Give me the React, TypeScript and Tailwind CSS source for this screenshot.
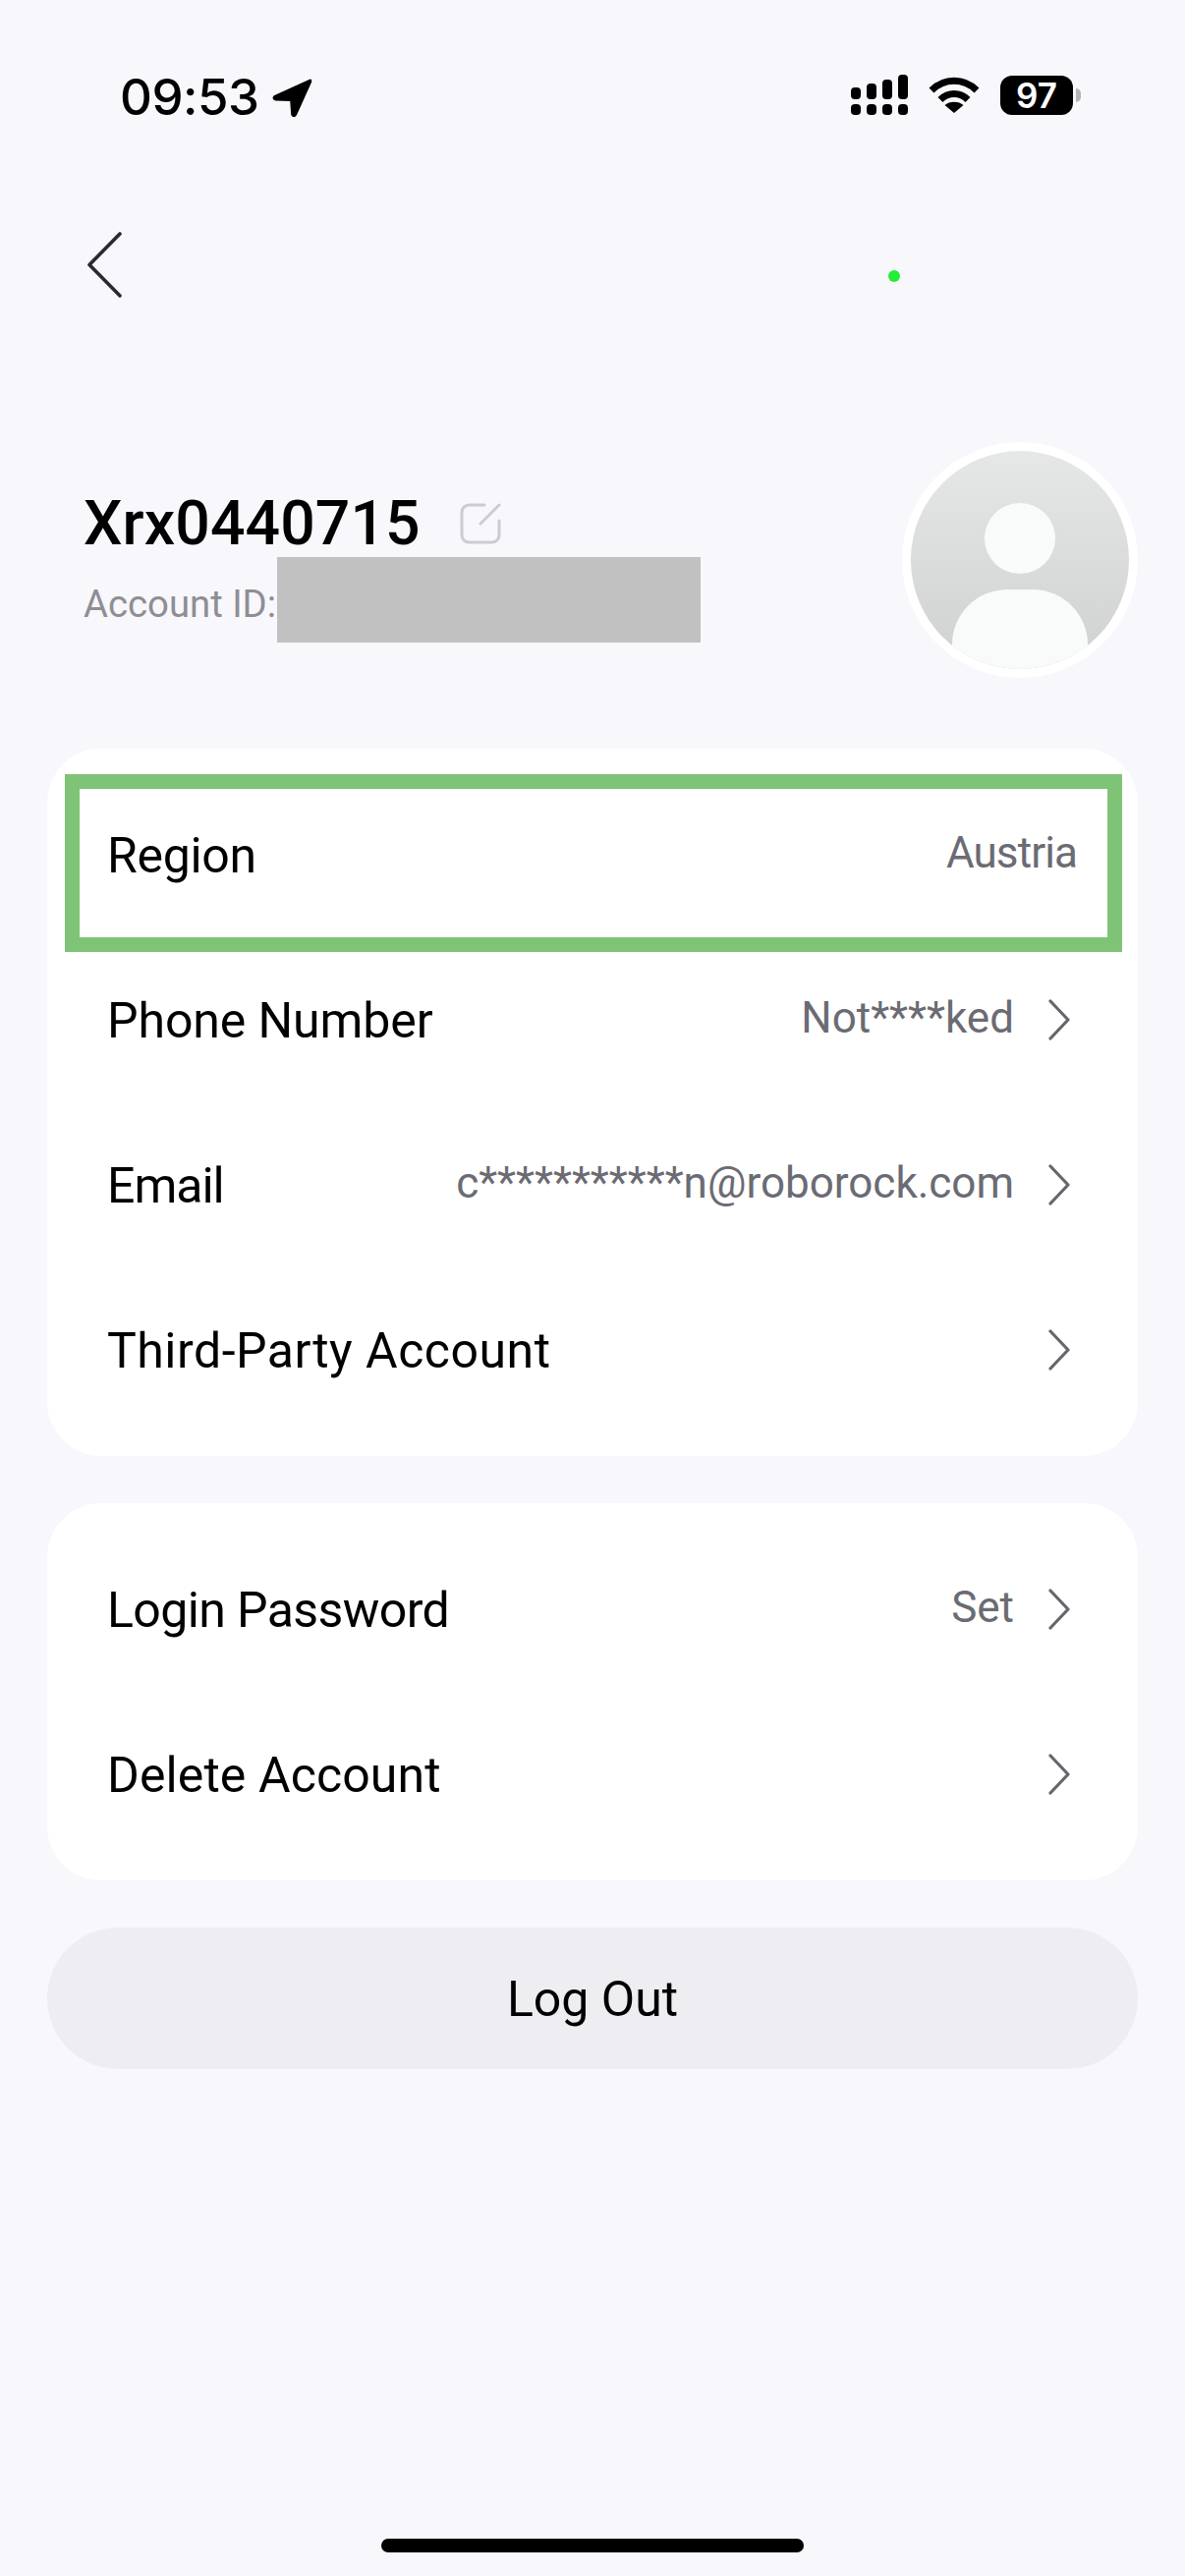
import React from "react";

const Chevron = () => (
  <svg width="24" height="42" viewBox="0 0 24 42" fill="none" className="shrink-0">
    <path d="M3 2L21 21L3 40" stroke="#66666d" strokeWidth="3.2" strokeLinecap="round" strokeLinejoin="round" />
  </svg>
);

function Row({ label, value, chevron = true, valueClass = "", labelClass = "" }: { label: string; value?: string; chevron?: boolean; valueClass?: string; labelClass?: string }) {
  return (
    <div className={`h-[168px] flex items-center pl-[61px] ${chevron ? "pr-[68px]" : "pr-[62px]"}`}>
      <span className={`text-[50px] leading-[60px] text-black font-[450] ${labelClass}`}>{label}</span>
      <div className="ml-auto flex items-center -translate-y-[3px]">
        {value && <span className={`text-[44px] leading-[56px] text-[#6b6b73] ${valueClass}`}>{value}</span>}
        {chevron && <span className="ml-[34px] flex translate-y-[2px]"><Chevron /></span>}
      </div>
    </div>
  );
}

export default function App() {
  return (
    <div className="relative w-[1206px] h-[2622px] bg-[#f7f7fc] flex flex-col font-['Roboto',sans-serif]">
      {/* status bar */}
      <div className="h-[140px] flex items-start pt-[70px] pl-[122px] pr-[106px]">
        <span className="font-['Inter',sans-serif] font-medium text-[51px] leading-[58px] text-black tracking-[-0.5px]">09:53</span>
        <svg width="42" height="42" viewBox="0 0 40 40" className="ml-[12px] mt-[8px]">
          <path d="M37 3.5 L3 19 Q1 21 4 22.5 L19 23 L20 37 Q22 40 24 37 L38.5 5 Q39 2.5 37 3.5 Z" fill="#000" stroke="#000" strokeWidth="1.5" strokeLinejoin="round" />
        </svg>
        <div className="ml-auto flex items-center mt-[6px] gap-[21px]">
          <svg width="58" height="42" viewBox="0 0 58 42">
            <rect x="0" y="13" width="10" height="12" rx="4" fill="#000" />
            <rect x="16" y="9" width="10" height="16" rx="4" fill="#000" />
            <rect x="32" y="5" width="10" height="20" rx="4" fill="#000" />
            <rect x="48" y="0" width="10" height="25" rx="4" fill="#000" />
            <rect x="0" y="30" width="10" height="11" rx="4" fill="#000" />
            <rect x="16" y="30" width="10" height="11" rx="4" fill="#000" />
            <rect x="32" y="30" width="10" height="11" rx="4" fill="#000" />
            <rect x="48" y="30" width="10" height="11" rx="4" fill="#000" />
          </svg>
          <svg width="52" height="38" viewBox="0 0 52 38">
            <path d="M3 14C16 1 36 1 49 14" stroke="#000" strokeWidth="7" fill="none" />
            <path d="M12 23.5C20 15.5 32 15.5 40 23.5" stroke="#000" strokeWidth="7" fill="none" />
            <path d="M26 37L16.5 29C21 24.5 31 24.5 35.5 29Z" fill="#000" />
          </svg>
          <div className="flex items-center">
            <div className="w-[74px] h-[40px] rounded-[12px] bg-black flex items-center justify-center font-['Inter',sans-serif] text-white font-semibold text-[35px] leading-none">97</div>
            <div className="ml-[3px] w-[5px] h-[14px] rounded-r-[5px] bg-[#b5b5b8]"></div>
          </div>
        </div>
      </div>

      {/* header */}
      <div className="h-[310px] flex items-start pl-[88px]">
        <svg width="36" height="68" viewBox="0 0 36 68" fill="none" className="mt-[96px]">
          <path d="M34 2L3 33.5L34 65" stroke="#2a2a2e" strokeWidth="3.6" strokeLinecap="round" strokeLinejoin="round" />
        </svg>
        <div className="ml-[780px] mt-[135px] w-[12px] h-[12px] rounded-full bg-[#25ec36]"></div>
      </div>

      {/* profile */}
      <div className="h-[240px] flex items-start pl-[85px] pr-[48px]">
        <div className="flex flex-col pt-[51px]">
          <div className="flex items-center">
            <span className="text-[62.5px] leading-[64px] font-medium text-black tracking-[0.1px]">Xrx0440715</span>
            <svg width="44" height="44" viewBox="0 0 44 44" fill="none" className="ml-[39px]">
              <path d="M26 3H11C6 3 3 6 3 11V33C3 38 6 41 11 41H33C38 41 41 38 41 33V19" stroke="#cbcbd0" strokeWidth="3" strokeLinecap="round" />
              <path d="M22 22L41 3" stroke="#cbcbd0" strokeWidth="3" strokeLinecap="round" />
            </svg>
          </div>
          <div className="flex items-center mt-[2px]">
            <span className="text-[38.3px] leading-[44px] text-[#8e8e93] pt-[9px]">Account ID:</span>
            <div className="ml-[1px] w-[431px] h-[87px] bg-[#c1c1c1]"></div>
          </div>
        </div>
        <div className="relative ml-auto w-[240px] h-[240px] rounded-full bg-white flex items-center justify-center">
          <div className="relative w-[222px] h-[222px] rounded-full overflow-hidden bg-gradient-to-b from-[#e6e7e7] to-[#cfd1d1]">
            <div className="absolute left-[75px] top-[53px] w-[72px] h-[72px] rounded-full bg-[#f9fbfa]"></div>
            <div className="absolute left-[42px] top-[141px] w-[138px] h-[120px] rounded-t-[56px] bg-[#f9fbfa]"></div>
          </div>
        </div>
      </div>

      {/* card 1 */}
      <div className="relative mt-[72px] mx-[48px] h-[720px] rounded-[55px] bg-white pt-[25px]">
        <Row label="Region" value="Austria" chevron={false} labelClass="tracking-[-0.3px]" valueClass="tracking-[-0.9px]" />
        <Row label="Phone Number" value="Not****ked" labelClass="tracking-[-0.1px]" />
        <Row label="Email" value="c***********n@roborock.com" labelClass="tracking-[-1px]" />
        <Row label="Third-Party Account" labelClass="tracking-[0.5px]" />
        <div className="absolute left-[18px] top-[26px] w-[1076px] h-[181px] border-[15px] border-[#7fc476]"></div>
      </div>

      {/* card 2 */}
      <div className="mt-[48px] mx-[48px] h-[384px] rounded-[55px] bg-white pt-[25px]">
        <Row label="Login Password" value="Set" labelClass="tracking-[-0.6px]" />
        <Row label="Delete Account" labelClass="tracking-[0.1px]" />
      </div>

      {/* log out */}
      <div className="mt-[48px] mx-[48px] h-[144px] rounded-[72px] bg-[#eeeef2] flex items-center justify-center text-[50px] leading-[60px] font-[450] text-black pt-[2px]">Log Out</div>

      {/* home indicator */}
      <div className="absolute left-[388px] top-[2584px] w-[430px] h-[14px] rounded-full bg-black"></div>
    </div>
  );
}
